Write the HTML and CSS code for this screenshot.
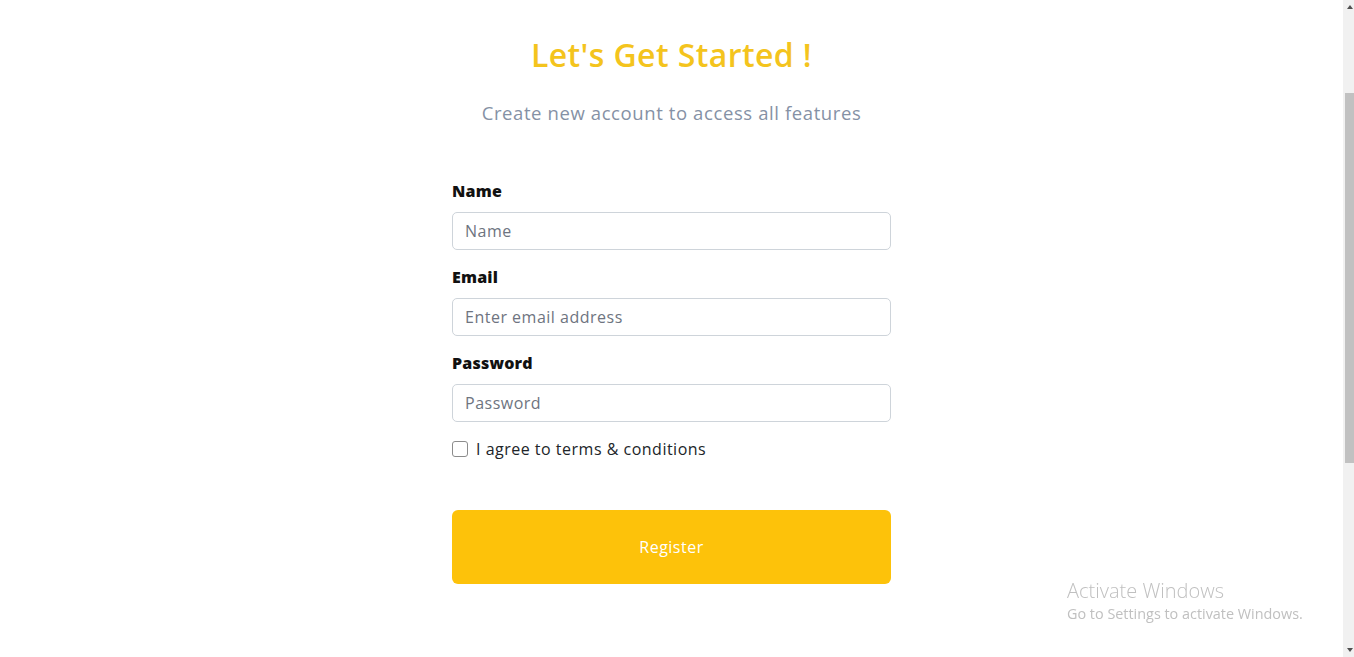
FILE: index.html
```html
<!DOCTYPE html>
<html lang="en">
<head>
<meta charset="utf-8">
<title>Register</title>
<link rel="stylesheet" href="styles.css">
</head>
<body>
<main class="page">
  <h1 class="title">Let's Get Started !</h1>
  <p class="subtitle">Create new account to access all features</p>
  <form class="form">
    <div class="field">
      <label class="label" for="name">Name</label>
      <input class="input" id="name" type="text" placeholder="Name">
    </div>
    <div class="field">
      <label class="label" for="email">Email</label>
      <input class="input" id="email" type="email" placeholder="Enter email address">
    </div>
    <div class="field">
      <label class="label" for="password">Password</label>
      <input class="input" id="password" type="password" placeholder="Password">
    </div>
    <label class="check">
      <span class="box"></span>
      <span class="check-text">I agree to terms &amp; conditions</span>
    </label>
    <button class="btn" type="button">Register</button>
  </form>
</main>
<div class="scrollbar">
  <span class="arrow up"></span>
  <span class="thumb"></span>
  <span class="arrow down"></span>
</div>
<div class="watermark">
  <div class="wm-title">Activate Windows</div>
  <div class="wm-sub">Go to Settings to activate Windows.</div>
</div>
</body>
</html>
```
FILE: styles.css
```css
* { box-sizing: border-box; }
html, body { margin: 0; padding: 0; height: 100%; overflow: hidden; background: #fff; }
body { font-family: "Open Sans", "Noto Sans", sans-serif; }

.page {
  width: 1343px;
  display: flex;
  flex-direction: column;
  align-items: center;
  padding-top: 33px;
}
.title {
  margin: 0;
  font-size: 32px;
  line-height: 44px;
  font-weight: 600;
  letter-spacing: 0.4px;
  color: #f4c41d;
}
.subtitle {
  margin: 22px 0 0;
  font-size: 18.5px;
  line-height: 28px;
  letter-spacing: 0.6px;
  color: #8591a5;
}
.form {
  width: 439px;
  margin-top: 52px;
  display: flex;
  flex-direction: column;
}
.field { display: flex; flex-direction: column; margin-bottom: 15px; }
.label {
  font-size: 16px;
  line-height: 24px;
  font-weight: 800;
  letter-spacing: 0.2px;
  color: #111;
  margin-bottom: 9px;
}
.input {
  height: 38px;
  width: 100%;
  border: 1px solid #ced4da;
  border-radius: 5px;
  padding: 0 12px;
  font-family: inherit;
  font-size: 16px;
  letter-spacing: 0.5px;
  color: #212529;
}
.input::placeholder { color: #6e7480; }
.check {
  display: flex;
  align-items: center;
  gap: 8px;
  height: 24px;
}
.box {
  width: 16px;
  height: 16px;
  border: 1px solid #8c8c8c;
  border-radius: 3px;
  background: #fff;
}
.check-text { font-size: 16px; letter-spacing: 0.5px; color: #212529; }
.btn {
  margin-top: 49px;
  height: 74px;
  width: 100%;
  border: none;
  border-radius: 6px;
  background: #fdc20a;
  color: #fff;
  font-family: inherit;
  font-size: 16px;
  letter-spacing: 0.5px;
}
.scrollbar {
  position: fixed;
  top: 0;
  right: 0;
  width: 11px;
  height: 657px;
  background: #f1f1f1;
}
.thumb {
  position: absolute;
  left: 2px;
  right: 0;
  top: 93px;
  height: 370px;
  background: #c1c1c1;
}
.arrow {
  position: absolute;
  left: 4px;
  width: 0; height: 0;
  border-left: 3.5px solid transparent;
  border-right: 3.5px solid transparent;
}
.arrow.up { top: 5px; border-bottom: 4px solid #505050; }
.arrow.down { bottom: 5px; border-top: 4px solid #505050; }
.watermark {
  position: fixed;
  left: 1067px;
  top: 578px;
  font-family: "Open Sans", sans-serif;
  color: #c0c0c0;
}
.wm-title { font-size: 20px; line-height: 26px; font-weight: 300; }
.wm-sub { font-size: 14.4px; line-height: 20px; }
```
